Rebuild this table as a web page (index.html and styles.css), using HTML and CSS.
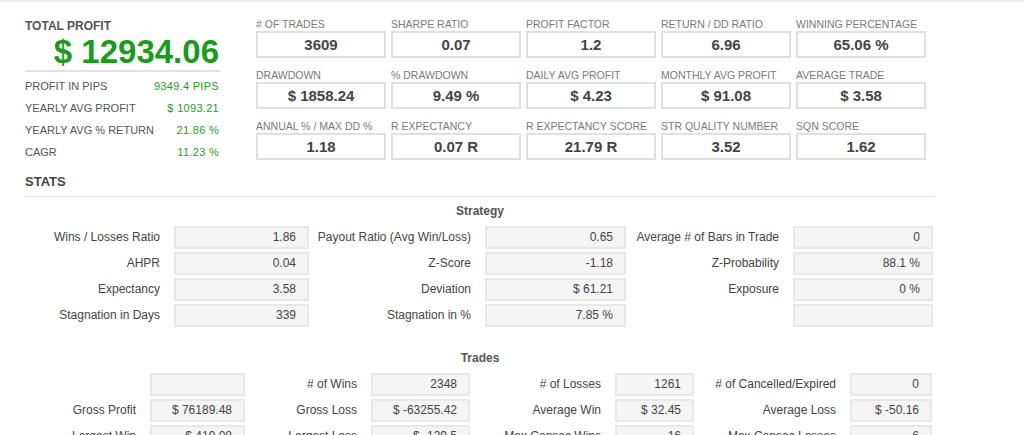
FILE: index.html
```html
<!DOCTYPE html>
<html lang="en">
<head>
<meta charset="utf-8">
<title>Strategy Report</title>
<link rel="stylesheet" href="styles.css">
</head>
<body>
<div class="page">
  <section class="top">
    <div class="summary">
      <div class="summary-title">TOTAL PROFIT</div>
      <div class="summary-total">$ 12934.06</div>
      <div class="summary-rows">
        <div class="summary-row"><span>PROFIT IN PIPS</span><span class="green">9349.4 PIPS</span></div>
        <div class="summary-row"><span>YEARLY AVG PROFIT</span><span class="green">$ 1093.21</span></div>
        <div class="summary-row"><span>YEARLY AVG % RETURN</span><span class="green">21.86 %</span></div>
        <div class="summary-row"><span>CAGR</span><span class="green">11.23 %</span></div>
      </div>
    </div>
    <div class="metrics">
      <div class="metric"><div class="metric-label"># OF TRADES</div><div class="metric-box">3609</div></div>
      <div class="metric"><div class="metric-label">SHARPE RATIO</div><div class="metric-box">0.07</div></div>
      <div class="metric"><div class="metric-label">PROFIT FACTOR</div><div class="metric-box">1.2</div></div>
      <div class="metric"><div class="metric-label">RETURN / DD RATIO</div><div class="metric-box">6.96</div></div>
      <div class="metric"><div class="metric-label">WINNING PERCENTAGE</div><div class="metric-box">65.06 %</div></div>
      <div class="metric"><div class="metric-label">DRAWDOWN</div><div class="metric-box">$ 1858.24</div></div>
      <div class="metric"><div class="metric-label">% DRAWDOWN</div><div class="metric-box">9.49 %</div></div>
      <div class="metric"><div class="metric-label">DAILY AVG PROFIT</div><div class="metric-box">$ 4.23</div></div>
      <div class="metric"><div class="metric-label">MONTHLY AVG PROFIT</div><div class="metric-box">$ 91.08</div></div>
      <div class="metric"><div class="metric-label">AVERAGE TRADE</div><div class="metric-box">$ 3.58</div></div>
      <div class="metric"><div class="metric-label">ANNUAL % / MAX DD %</div><div class="metric-box">1.18</div></div>
      <div class="metric"><div class="metric-label">R EXPECTANCY</div><div class="metric-box">0.07 R</div></div>
      <div class="metric"><div class="metric-label">R EXPECTANCY SCORE</div><div class="metric-box">21.79 R</div></div>
      <div class="metric"><div class="metric-label">STR QUALITY NUMBER</div><div class="metric-box">3.52</div></div>
      <div class="metric"><div class="metric-label">SQN SCORE</div><div class="metric-box">1.62</div></div>
    </div>
  </section>

  <section class="stats">
    <h2 class="stats-title">STATS</h2>

    <h3 class="group-title">Strategy</h3>
    <div class="grid grid-strategy">
      <div class="lbl">Wins / Losses Ratio</div><div class="val">1.86</div>
      <div class="lbl">Payout Ratio (Avg Win/Loss)</div><div class="val">0.65</div>
      <div class="lbl">Average # of Bars in Trade</div><div class="val">0</div>

      <div class="lbl">AHPR</div><div class="val">0.04</div>
      <div class="lbl">Z-Score</div><div class="val">-1.18</div>
      <div class="lbl">Z-Probability</div><div class="val">88.1 %</div>

      <div class="lbl">Expectancy</div><div class="val">3.58</div>
      <div class="lbl">Deviation</div><div class="val">$ 61.21</div>
      <div class="lbl">Exposure</div><div class="val">0 %</div>

      <div class="lbl">Stagnation in Days</div><div class="val">339</div>
      <div class="lbl">Stagnation in %</div><div class="val">7.85 %</div>
      <div class="lbl"></div><div class="val"></div>
    </div>

    <h3 class="group-title group-trades">Trades</h3>
    <div class="grid grid-trades">
      <div class="lbl"></div><div class="val"></div>
      <div class="lbl"># of Wins</div><div class="val">2348</div>
      <div class="lbl"># of Losses</div><div class="val">1261</div>
      <div class="lbl"># of Cancelled/Expired</div><div class="val">0</div>

      <div class="lbl">Gross Profit</div><div class="val">$ 76189.48</div>
      <div class="lbl">Gross Loss</div><div class="val">$ -63255.42</div>
      <div class="lbl">Average Win</div><div class="val">$ 32.45</div>
      <div class="lbl">Average Loss</div><div class="val">$ -50.16</div>

      <div class="lbl">Largest Win</div><div class="val">$ 419.08</div>
      <div class="lbl">Largest Loss</div><div class="val">$ -139.5</div>
      <div class="lbl">Max Consec Wins</div><div class="val">16</div>
      <div class="lbl">Max Consec Losses</div><div class="val">6</div>
    </div>
  </section>
</div>
</body>
</html>
```

FILE: styles.css
```css
html, body {
  margin: 0;
  padding: 0;
  background: #ffffff;
  overflow: hidden;
}

body {
  font-family: "Liberation Sans", Arial, sans-serif;
  color: #444;
  border-top: 2px solid #ececec;
}

.page {
  padding: 14px 0 0 25px;
}

/* ---------- top area ---------- */
.top {
  display: flex;
  align-items: flex-start;
}

.summary {
  width: 195px;
  padding-top: 2px;
}

.summary-title {
  font-size: 12px;
  font-weight: bold;
  line-height: 16px;
  color: #555;
}

.summary-total {
  font-size: 33px;
  font-weight: bold;
  line-height: 36px;
  color: #1b9a1b;
  text-align: right;
  padding-right: 1px;
  border-bottom: 2px solid #e2e2e2;
}

.summary-rows {
  margin-top: 3px;
}

.summary-row {
  display: flex;
  justify-content: space-between;
  font-size: 11px;
  line-height: 22px;
  color: #555;
}

.summary-row:last-child {
  line-height: 23px;
}

.green {
  color: #25a025;
  letter-spacing: 0.3px;
  padding-right: 1px;
}

.metrics {
  margin-left: 36px;
  padding-top: 1px;
  display: grid;
  grid-template-columns: repeat(5, 130px);
  column-gap: 5px;
  row-gap: 10px;
}

.metric-label {
  font-size: 10.5px;
  line-height: 14px;
  color: #7a7a7a;
  white-space: nowrap;
}

.metric-box {
  height: 23px;
  border: 2px solid #e0e0e0;
  font-size: 15px;
  font-weight: bold;
  line-height: 23px;
  text-align: center;
  color: #444;
}

/* ---------- stats ---------- */
.stats {
  width: 910px;
  margin-top: 9px;
}

.stats-title {
  margin: 0;
  font-size: 13px;
  font-weight: bold;
  line-height: 18px;
  color: #444;
  padding-bottom: 5px;
  border-bottom: 1px solid #dddddd;
}

.group-title {
  margin: 6px 0 7px;
  font-size: 12px;
  font-weight: bold;
  line-height: 16px;
  text-align: center;
  color: #555;
}

.group-trades {
  margin-top: 23px;
}

.grid {
  display: grid;
  row-gap: 3px;
}

.grid-strategy {
  grid-template-columns: 149px 135px 176px 141px 167px 140px;
}

.grid-trades {
  grid-template-columns: 125px 95px 126px 99px 145px 79px 156px 82px;
}

.lbl {
  font-size: 12px;
  line-height: 23px;
  text-align: right;
  padding-right: 14px;
  color: #444;
  white-space: nowrap;
}

.grid-trades .lbl:first-child {
  padding-right: 13px;
}

.val {
  height: 19px;
  border: 2px solid #e8e8e8;
  background: #f5f5f5;
  font-size: 12px;
  line-height: 19px;
  text-align: right;
  padding-right: 11px;
  color: #444;
  white-space: nowrap;
}
```
